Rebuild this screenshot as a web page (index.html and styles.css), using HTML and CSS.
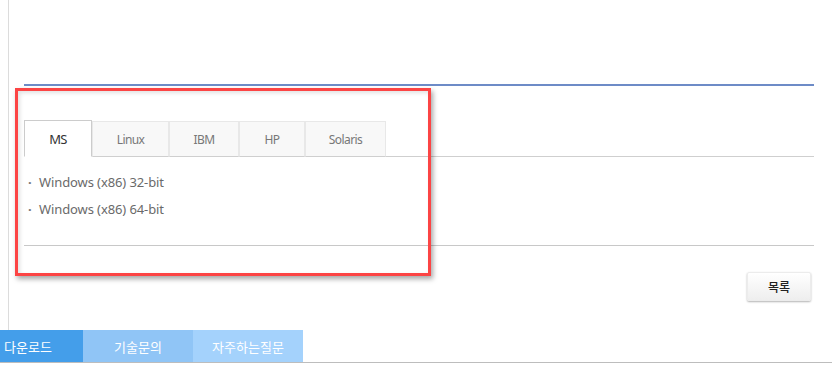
FILE: index.html
```html
<!DOCTYPE html>
<html lang="ko">
<head>
<meta charset="utf-8">
<link rel="stylesheet" href="styles.css">
</head>
<body>
<div class="page">
  <div class="head-space"></div>
  <div class="blue-rule"></div>
  <div class="section">
    <div class="highlight"></div>
    <ul class="tabs">
      <li class="tab active">MS</li>
      <li class="tab">Linux</li>
      <li class="tab">IBM</li>
      <li class="tab">HP</li>
      <li class="tab">Solaris</li>
    </ul>
    <ul class="files">
      <li>Windows (x86) 32-bit</li>
      <li>Windows (x86) 64-bit</li>
    </ul>
  </div>
  <div class="actions">
    <button class="btn">목록</button>
  </div>
</div>
<nav class="bottom-nav">
  <a class="nav-item n1">다운로드</a>
  <a class="nav-item n2">기술문의</a>
  <a class="nav-item n3">자주하는질문</a>
</nav>
</body>
</html>
```
FILE: styles.css
```css
* { box-sizing: border-box; }
html, body { margin: 0; padding: 0; background: #fff; }
body {
  font-family: "Noto Sans", "Noto Sans CJK KR", sans-serif;
  color: #666;
  width: 832px;
  height: 372px;
  overflow: hidden;
}
.page {
  margin-left: 8px;
  border-left: 1px solid #dcdcdc;
  padding: 0 18px 0 15px;
  height: 330px;
}
.head-space { height: 84px; }
.blue-rule { height: 2px; background: #6d8bc7; }
.section {
  position: relative;
  padding-top: 34px;
  border-bottom: 1px solid #c8c8c8;
  height: 160px;
}
.highlight {
  position: absolute;
  left: -9px;
  top: 2px;
  width: 416px;
  height: 188px;
  border: 3px solid #fc4444;
  box-shadow: 2px 3px 5px rgba(0,0,0,0.35), inset 2px 2px 4px rgba(0,0,0,0.12);
  pointer-events: none;
  z-index: 2;
}
.tabs {
  list-style: none;
  margin: 0;
  padding: 0;
  display: flex;
  align-items: flex-end;
  height: 37px;
  border-bottom: 1px solid #cfcfcf;
}
.tab {
  height: 36px;
  margin-bottom: -1px;
  padding: 0;
  display: flex;
  align-items: center;
  justify-content: center;
  font-size: 12px;
  letter-spacing: -0.6px;
  color: #777;
  background: #f8f8f8;
  border: 1px solid #e8e8e8;
  border-bottom-color: #cfcfcf;
}
.tab.active {
  height: 37px;
  color: #333;
  background: #fff;
  border-color: #cccccc;
  border-bottom-color: #fff;
  font-size: 13px;
}
.tab:nth-child(1) { width: 68px; }
.tab:nth-child(2) { width: 77px; }
.tab:nth-child(3) { width: 70px; }
.tab:nth-child(4) { width: 66px; }
.tab:nth-child(5) { width: 81px; }
.files {
  list-style: none;
  margin: 0;
  padding: 12px 0 0 4px;
}
.files li {
  height: 27px;
  line-height: 27px;
  font-size: 13px;
  letter-spacing: -0.1px;
  color: #6a6a6a;
}
.files li::before {
  content: "·";
  display: inline-block;
  width: 11px;
  text-align: left;
  font-weight: bold;
  color: #777;
}
.actions {
  display: flex;
  justify-content: flex-end;
  padding: 26px 3px 0 0;
}
.btn {
  width: 64px;
  height: 29px;
  border: 1px solid #ececec;
  border-radius: 2px;
  background: linear-gradient(#ffffff, #eeeeee);
  box-shadow: 0 1px 2px rgba(0,0,0,0.3);
  font-family: "Noto Sans CJK KR", sans-serif;
  font-size: 12px;
  font-weight: 500;
  color: #222;
  padding: 0;
}
.bottom-nav {
  display: flex;
  height: 33px;
  border-bottom: 1px solid #bdbdbd;
  overflow: hidden;
}
.nav-item {
  flex: 0 0 110px;
  height: 32px;
  display: flex;
  align-items: center;
  justify-content: center;
  color: #fff;
  font-family: "Noto Sans CJK KR", sans-serif;
  font-size: 13px;
}
.n1 { background: #449eea; margin-left: -27px; }
.n2 { background: #90c5f6; }
.n3 { background: #a4d2fc; }
```
